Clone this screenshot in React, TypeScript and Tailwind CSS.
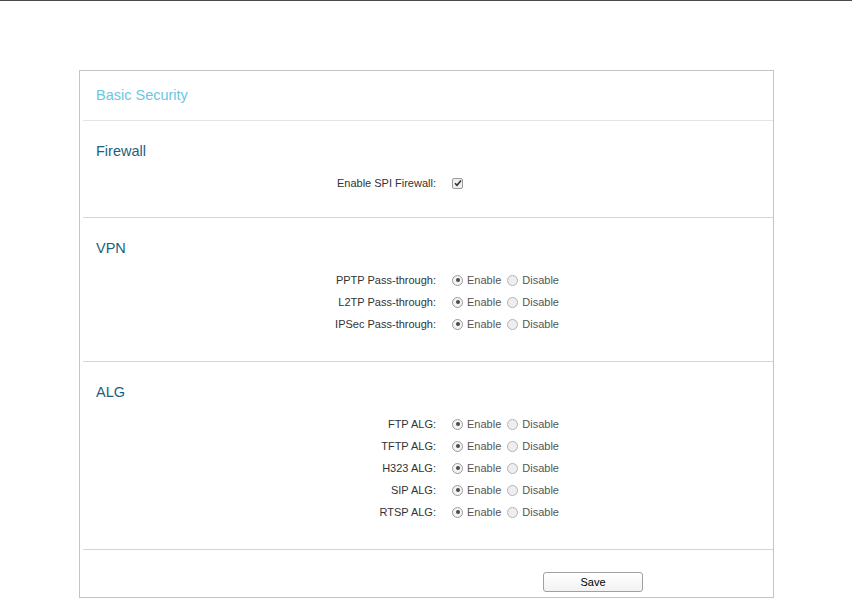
import React from 'react';

const FONT = { fontFamily: '"Liberation Sans", Arial, sans-serif' };

type Row = { label: string };

const vpnRows: Row[] = [
  { label: 'PPTP Pass-through:' },
  { label: 'L2TP Pass-through:' },
  { label: 'IPSec Pass-through:' },
];

const algRows: Row[] = [
  { label: 'FTP ALG:' },
  { label: 'TFTP ALG:' },
  { label: 'H323 ALG:' },
  { label: 'SIP ALG:' },
  { label: 'RTSP ALG:' },
];

function Radio({ checked }: { checked: boolean }) {
  return (
    <span
      className={`flex h-[11px] w-[11px] items-center justify-center rounded-full border ${
        checked ? 'border-[#9a9a9a] bg-[#f4f4f4]' : 'border-[#b4b4b4] bg-[#eeeeee]'
      }`}
    >
      {checked && <span className="h-[4px] w-[4px] rounded-full bg-[#4a4a4a]" />}
    </span>
  );
}

function Checkbox() {
  return (
    <span className="flex h-[11px] w-[11px] items-center justify-center rounded-[2px] border border-[#9a9a9a] bg-[#efefef]">
      <svg width="8" height="8" viewBox="0 0 8 8">
        <path d="M1 4.2 L3 6.3 L7 1.5" fill="none" stroke="#333" strokeWidth="1.6" />
      </svg>
    </span>
  );
}

function FormRow({ label, children }: { label: string; children: React.ReactNode }) {
  return (
    <div className="flex h-[22px] items-center text-[11px]">
      <div className="w-[356px] text-right text-[#333]">{label}</div>
      <div className="ml-4 flex items-center text-[#555]">{children}</div>
    </div>
  );
}

function EnableDisable({ label }: { label: string }) {
  return (
    <FormRow label={label}>
      <Radio checked />
      <span className="ml-[4px]">Enable</span>
      <span className="ml-[6px]">
        <Radio checked={false} />
      </span>
      <span className="ml-[4px]">Disable</span>
    </FormRow>
  );
}

function Divider() {
  return <div className="ml-[3px] border-t border-[#d4d4d4]" />;
}

function Heading({ children }: { children: React.ReactNode }) {
  return <h2 className="h-5 pl-4 text-[14.5px] leading-5 text-[#1d5f7e]">{children}</h2>;
}

export default function App() {
  return (
    <div className="min-h-[599px] bg-white" style={FONT}>
      <div className="h-px bg-[#4a4a4a]" />
      <div className="ml-[79px] mt-[69px] w-[695px] border border-[#c4c4c4]">
        <div className="flex h-[49px] items-center pl-4 text-[14.5px] text-[#6cc6df]">Basic Security</div>
        <div className="ml-[3px] border-t border-[#e4e4e4]" />

        <div className="pb-[23px] pt-5">
          <Heading>Firewall</Heading>
          <div className="mt-[11px]">
            <FormRow label="Enable SPI Firewall:">
              <Checkbox />
            </FormRow>
          </div>
        </div>
        <Divider />

        <div className="pb-[26px] pt-5">
          <Heading>VPN</Heading>
          <div className="mt-[11px]">
            {vpnRows.map((r) => (
              <EnableDisable key={r.label} label={r.label} />
            ))}
          </div>
        </div>
        <Divider />

        <div className="pb-[26px] pt-5">
          <Heading>ALG</Heading>
          <div className="mt-[11px]">
            {algRows.map((r) => (
              <EnableDisable key={r.label} label={r.label} />
            ))}
          </div>
        </div>
        <Divider />

        <div className="h-[47px] pt-[22px]">
          <button className="ml-[463px] flex h-[20px] w-[100px] items-center justify-center rounded-[3px] border border-[#a0a0a0] bg-gradient-to-b from-white to-[#f2f2f2] text-[11px] text-black">
            Save
          </button>
        </div>
      </div>
    </div>
  );
}
